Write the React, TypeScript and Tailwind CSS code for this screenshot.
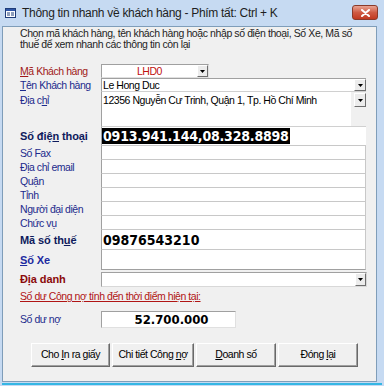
import React from 'react';

const label = "font-['Liberation_Sans',sans-serif] text-[10.5px] tracking-[-0.45px] leading-none";
const boldLabel = "font-['Liberation_Sans',sans-serif] font-bold text-[11px] tracking-[-0.1px] leading-none";
const valueFont = "font-['DejaVu_Sans_Condensed','DejaVu_Sans',sans-serif] font-bold";

function DropButton({ className = '' }: { className?: string }) {
  return (
    <div
      className={`${className} flex items-center justify-center bg-[#ececec] border border-t-white border-l-white border-r-[#6e6e6e] border-b-[#6e6e6e]`}
    >
      <svg width="5" height="3" viewBox="0 0 5 3">
        <path d="M0 0h5L2.5 3z" fill="#000" />
      </svg>
    </div>
  );
}

function Row({
  text,
  height,
  labelClass = 'text-[#1c2a8c]',
  alignTop = false,
  children,
}: {
  text: React.ReactNode;
  height: string;
  labelClass?: string;
  alignTop?: boolean;
  children: React.ReactNode;
}) {
  return (
    <div className={`flex ${height}`}>
      <div className={`w-[81px] shrink-0 flex whitespace-nowrap ${alignTop ? 'items-start pt-[3px]' : 'items-center'} ${labelClass}`}>
        {text}
      </div>
      {children}
    </div>
  );
}

function Button({ children, w }: { children: React.ReactNode; w: string }) {
  return (
    <button
      className={`${w} h-[24px] bg-[#f0f0f0] border border-t-white border-l-white border-r-[#696969] border-b-[#696969] shadow-[inset_-1px_-1px_0_#a0a0a0] ${label} text-[#000]`}
    >
      {children}
    </button>
  );
}

export default function App() {
  return (
    <div className="w-[384px] h-[386px] bg-[#c6daf2] flex flex-col overflow-hidden">
      {/* Title bar */}
      <div className="h-[26px] shrink-0 flex items-center relative">
        <svg className="ml-[5px]" width="11" height="10" viewBox="0 0 11 10">
          <rect x="0.5" y="0.5" width="10" height="9" fill="#fff" stroke="#1f3c78" />
          <rect x="1" y="1" width="9" height="2" fill="#2f56a8" />
          <path d="M2 5h3M2 7h3M6 5h3M6 7h3" stroke="#1f3c78" />
        </svg>
        <span className="ml-[6px] text-[12px] text-[#1e1e1e] font-['Liberation_Sans',sans-serif] tracking-[-0.3px]">
          Thông tin nhanh về khách hàng - Phím tất: Ctrl + K
        </span>
        <div className="absolute left-[352px] top-[5px] w-[26px] h-[15px] rounded-[3px] border border-[#8a3a2a] bg-gradient-to-b from-[#e8a393] via-[#cf5a43] to-[#c2381f] flex items-center justify-center">
          <svg width="9" height="8" viewBox="0 0 9 8">
            <path d="M1 1l7 6M8 1L1 7" stroke="#fff" strokeWidth="2" strokeLinecap="round" />
          </svg>
        </div>
      </div>

      {/* Client area */}
      <div className="h-[356px] shrink-0 ml-[2px] mr-[7px] bg-[#f0f0f0] border border-[#7f9db9] flex flex-col pl-[17px]">
        <p className="font-['Liberation_Sans',sans-serif] text-[10.5px] tracking-[-0.4px] leading-[11px] text-[#1e1e1e] mt-[1px] pr-[10px]">
          Chọn mã khách hàng, tên khách hàng hoặc nhập số điện thoại, Số Xe, Mã số thuế để xem nhanh các thông tin còn lại
        </p>

        <div className="mt-[14px] flex flex-col">
          <Row text={<span><u>M</u>ã Khách hàng</span>} height="h-[14px]" labelClass={`${label} text-[#a01818]`}>
            <div className="w-[108px] flex bg-white border border-t-[#a0a0a0] border-l-[#a0a0a0] border-r-[#e0e0e0] border-b-[#e0e0e0]">
              <div className={`flex-1 flex items-center justify-center ${label} text-[#c01010]`}>LHD0</div>
              <DropButton className="w-[11px]" />
            </div>
          </Row>

          <div className="flex flex-col">
            <Row text={<span className={label}><u>T</u>ên Khách hàng</span>} height="h-[14px]">
              <div className="w-[265px] flex bg-white border-l border-t border-[#a0a0a0] border-b border-b-[#d0d0d0]">
                <div className={`flex-1 flex items-center pl-[1px] ${label} text-black`}>Le Hong Duc</div>
                <DropButton className="w-[12px]" />
              </div>
            </Row>
            <Row text={<span className={label}>Địa c<u>h</u>ỉ</span>} height="h-[35px]" alignTop>
              <div className="w-[265px] flex bg-white border-l border-[#a0a0a0] border-b border-b-[#d0d0d0]">
                <div className={`flex-1 pt-[3px] pl-[1px] ${label} text-black`}>12356 Nguyễn Cư Trinh, Quận 1, Tp. Hồ Chí Minh</div>
                <div className="w-[15px] flex flex-col bg-[#f0f0f0]">
                  <DropButton className="w-[12px] h-[14px] ml-[3px] mt-[1px]" />
                </div>
              </div>
            </Row>
            <Row text={<span className={boldLabel}>Số điệ<u>n</u> thoại</span>} height="h-[19px]" labelClass="text-[#0e1a5c]">
              <div className="w-[265px] flex items-center bg-white border-l border-[#a0a0a0] border-b border-b-[#c8c8c8]">
                <span className={`${valueFont} text-[14px] leading-[16px] text-white bg-black pl-[1px] pr-[1px] tracking-[-0.2px]`}>
                  0913.941.144,08.328.8898
                </span>
              </div>
            </Row>
            {['Số Fax', 'Địa chỉ email', 'Quận', 'Tỉnh', 'Người đại diện', 'Chức vụ'].map((t) => (
              <Row key={t} text={<span className={label}>{t}</span>} height="h-[14px]">
                <div className="w-[265px] bg-white border-l border-r border-[#a0a0a0] border-r-[#c8c8c8] border-b border-b-[#c8c8c8]" />
              </Row>
            ))}
            <Row text={<span className={boldLabel}>Mã số th<u>u</u>ế</span>} height="h-[20px]" labelClass="text-[#0e1a5c]">
              <div className="w-[265px] flex items-center bg-white border-l border-r border-[#a0a0a0] border-r-[#c8c8c8] border-b border-b-[#c8c8c8]">
                <span className={`${valueFont} text-[14px] leading-none text-black pl-[1px]`}>09876543210</span>
              </div>
            </Row>
            <Row text={<span className={boldLabel}><u>S</u>ố Xe</span>} height="h-[20px]" labelClass="text-[#1c2aa0]">
              <div className="w-[265px] bg-white border-l border-r border-[#a0a0a0] border-r-[#c8c8c8] border-b border-b-[#a0a0a0]" />
            </Row>
          </div>

          <div className="mt-[2px]">
            <Row text={<span className={boldLabel}>Địa danh</span>} height="h-[15px]" labelClass="text-[#8b0a0a]">
              <div className="w-[266px] flex bg-white border border-t-[#a0a0a0] border-l-[#a0a0a0] border-r-[#d8d8d8] border-b-[#d8d8d8]">
                <div className="flex-1" />
                <DropButton className="w-[11px]" />
              </div>
            </Row>
          </div>

          <p className={`${label} text-[#b01414] underline mt-[4px]`}>Số dư Công nợ tính đến thời điểm hiện tại:</p>

          <div className="mt-[9px]">
            <Row text={<span className={label}>Số dư nợ</span>} height="h-[17px]">
              <div className="w-[135px] flex items-center justify-center bg-white border border-t-[#a0a0a0] border-l-[#a0a0a0] border-r-[#e0e0e0] border-b-[#e0e0e0]">
                <span className={`${valueFont} text-[13px] leading-none text-black ml-[6px]`}>52.700.000</span>
              </div>
            </Row>
          </div>

          <div className="mt-[15px] ml-[11px] flex gap-[2px]">
            <Button w="w-[79px]">Cho <u>I</u>n ra giấy</Button>
            <Button w="w-[82px]">Chi tiết Công <u>n</u>ợ</Button>
            <Button w="w-[80px]">
              <u>D</u>oanh số
            </Button>
            <Button w="w-[80px]">Đóng <u>l</u>ại</Button>
          </div>
        </div>
      </div>

      <div className="h-[2px] mt-[1px] shrink-0 ml-[2px] mr-[2px] bg-[#35b6e4]" />
    </div>
  );
}
